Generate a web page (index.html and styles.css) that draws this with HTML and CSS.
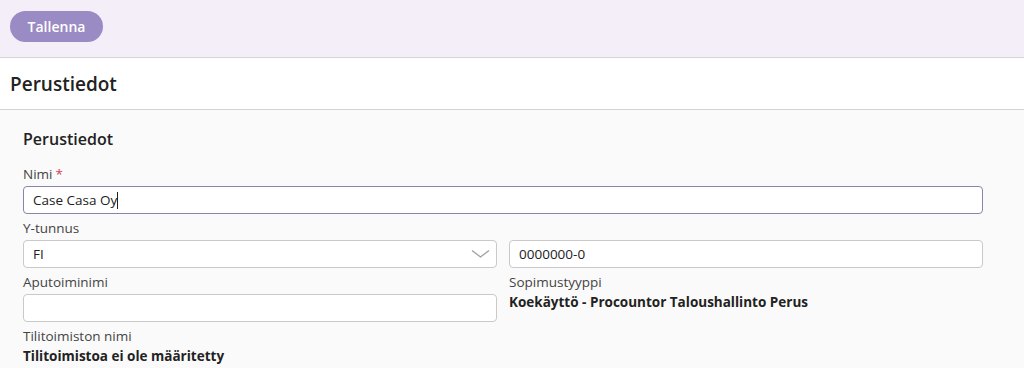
FILE: index.html
```html
<!DOCTYPE html>
<html lang="fi">
<head>
<meta charset="utf-8">
<title>Perustiedot</title>
<link rel="stylesheet" href="styles.css">
</head>
<body>
<div class="toolbar">
  <button class="btn-primary">Tallenna</button>
</div>
<div class="page-header">
  <h1 class="page-title">Perustiedot</h1>
</div>
<div class="content">
  <h2 class="section-title">Perustiedot</h2>
  <div class="field">
    <label class="label">Nimi<span class="req">*</span></label>
    <div class="input input-focus">Case Casa Oy<span class="caret"></span></div>
  </div>
  <div class="field">
    <label class="label">Y-tunnus</label>
    <div class="row">
      <div class="input select">FI
        <svg class="chevron" width="19" height="10" viewBox="0 0 19 10"><path d="M1 1.5 L9.5 8 L18 1.5" fill="none" stroke="#a0a0a0" stroke-width="1.3"/></svg>
      </div>
      <div class="input">0000000-0</div>
    </div>
  </div>
  <div class="row">
    <div class="field">
      <label class="label">Aputoiminimi</label>
      <div class="input"></div>
    </div>
    <div class="field">
      <label class="label">Sopimustyyppi</label>
      <div class="value">Koekäyttö - Procountor Taloushallinto Perus</div>
    </div>
  </div>
  <div class="field">
    <label class="label">Tilitoimiston nimi</label>
    <div class="value">Tilitoimistoa ei ole määritetty</div>
  </div>
</div>
</body>
</html>
```
FILE: styles.css
```css
* { box-sizing: border-box; }
html, body { margin: 0; padding: 0; }
body {
  font-family: "Open Sans", "Noto Sans", sans-serif;
  color: #222;
  background: #fafafa;
  width: 1024px;
  height: 368px;
  overflow: hidden;
}
.toolbar {
  height: 58px;
  background: #f3eef8;
  border-bottom: 1px solid #d4d4d4;
  padding: 11px 10px;
}
.btn-primary {
  height: 31px;
  width: 93px;
  border: none;
  border-radius: 16px;
  background: #9a8bc4;
  color: #fff;
  font-family: inherit;
  font-size: 14px;
  font-weight: 600;
  padding: 0;
}
.page-header {
  height: 52px;
  background: #fff;
  border-bottom: 1px solid #d4d4d4;
  padding: 0 10px;
  display: flex;
  align-items: center;
}
.page-title {
  margin: 0;
  font-size: 19px;
  font-weight: 600;
  color: #222;
}
.content {
  padding: 17px 41px 0 23px;
}
.section-title {
  margin: 0 0 17px;
  font-size: 16px;
  font-weight: 600;
  color: #222;
  line-height: 24px;
}
.field {
  display: flex;
  flex-direction: column;
  margin-bottom: 8px;
}
.row .field { margin-bottom: 0; }
.row {
  display: grid;
  grid-template-columns: 1fr 1fr;
  column-gap: 12px;
}
.content > .row { margin-bottom: 8px; }
.label {
  font-size: 13.5px;
  line-height: 13px;
  padding-bottom: 5px;
  color: #444;
}
.req { color: #d0405a; margin-left: 3px; }
.input {
  height: 28px;
  border: 1px solid #c9c9c9;
  border-radius: 4px;
  background: #fff;
  font-size: 13.5px;
  line-height: 26px;
  padding: 0 9px;
  color: #222;
  position: relative;
}
.input-focus { border-color: #8b84a8; }
.caret {
  display: inline-block;
  width: 1px;
  height: 17px;
  background: #222;
  vertical-align: -4px;
}
.chevron {
  position: absolute;
  right: 6px;
  top: 8px;
}
.value {
  font-size: 13.5px;
  font-weight: 700;
  line-height: 16px;
  color: #222;
}
```
